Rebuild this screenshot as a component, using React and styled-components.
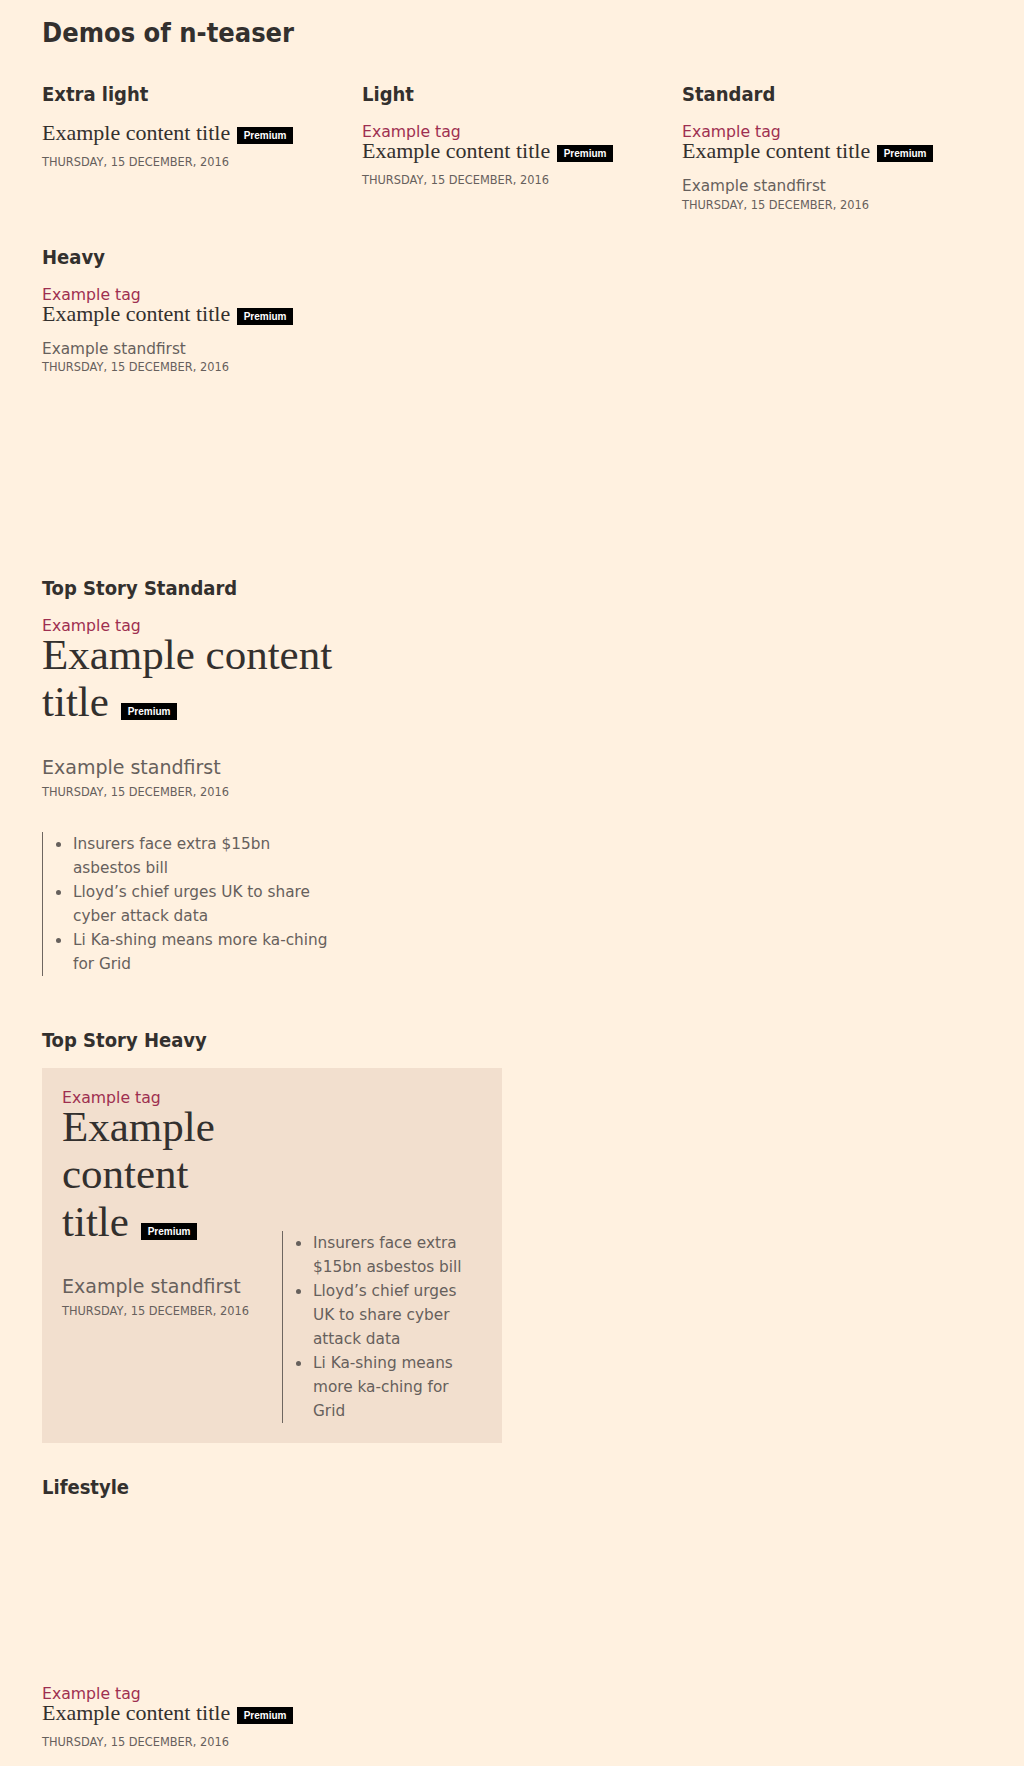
import styled, { createGlobalStyle } from 'styled-components';

const GlobalStyle = createGlobalStyle`
    html, body {
        margin: 0;
        background: #fff1e0;
    }
    body {
        font-family: "DejaVu Sans", sans-serif;
        color: #33302e;
    }
`;

const related = [
    'Insurers face extra $15bn asbestos bill',
    'Lloyd’s chief urges UK to share cyber attack data',
    'Li Ka-shing means more ka-ching for Grid',
];

const Teaser = ({ tag, standfirst, size = 'sm', titleSize }) => (
    <>
        {tag && <Tag>{tag}</Tag>}
        <Title $size={titleSize || size}>
            Example content title{' '}
            <Premium>Premium</Premium>
        </Title>
        {standfirst && <Standfirst $large={size === 'lg'}>Example standfirst</Standfirst>}
        <Timestamp $large={size === 'lg'}>Thursday, 15 December, 2016</Timestamp>
    </>
);

const RelatedLinks = () => (
    <Related>
        {related.map((item) => (
            <RelatedItem key={item}>
                <Dot />
                <span>{item}</span>
            </RelatedItem>
        ))}
    </Related>
);

export default function App() {
    return (
        <Page>
            <GlobalStyle />
            <PageTitle>Demos of n-teaser</PageTitle>

            <DemoGrid>
                <Demo>
                    <DemoTitle>Extra light</DemoTitle>
                    <Teaser titleSize="xs" />
                </Demo>
                <Demo>
                    <DemoTitle>Light</DemoTitle>
                    <Teaser tag="Example tag" />
                </Demo>
                <Demo>
                    <DemoTitle>Standard</DemoTitle>
                    <Teaser tag="Example tag" standfirst />
                </Demo>
                <Demo>
                    <DemoTitle>Heavy</DemoTitle>
                    <Teaser tag="Example tag" standfirst />
                    <ImageSlot />
                </Demo>
            </DemoGrid>

            <Section>
                <DemoTitle>Top Story Standard</DemoTitle>
                <Column>
                    <Teaser tag="Example tag" standfirst size="lg" />
                    <RelatedLinks />
                </Column>
            </Section>

            <Section>
                <DemoTitle>Top Story Heavy</DemoTitle>
                <HeavyBox>
                    <div>
                        <Teaser tag="Example tag" standfirst size="lg" />
                    </div>
                    <div>
                        <ImageSlot />
                        <RelatedLinks />
                    </div>
                </HeavyBox>
            </Section>

            <Section>
                <DemoTitle>Lifestyle</DemoTitle>
                <Column>
                    <ImageSlot />
                    <Teaser tag="Example tag" />
                </Column>
            </Section>
        </Page>
    );
}

const Page = styled.div`
    padding: 15px 42px 16px;
`;

const PageTitle = styled.h1`
    font-family: "DejaVu Sans Condensed", "DejaVu Sans", sans-serif;
    font-stretch: condensed;
    font-size: 27px;
    line-height: 36px;
    font-weight: bold;
    margin: 0 0 29px;
    color: #33302e;
`;

const DemoGrid = styled.div`
    display: grid;
    grid-template-columns: repeat(3, 300px);
    column-gap: 20px;
    row-gap: 30px;
    align-items: start;
`;

const Demo = styled.div`
    display: flex;
    flex-direction: column;
`;

const Section = styled.section`
    display: flow-root;
    margin-top: 30px;
`;

const Column = styled.div`
    width: 300px;
`;

const DemoTitle = styled.h2`
    font-family: "DejaVu Sans Condensed", "DejaVu Sans", sans-serif;
    font-stretch: condensed;
    font-size: 20px;
    line-height: 28px;
    font-weight: bold;
    margin: 0 0 14px;
    color: #33302e;
`;

const Tag = styled.div`
    font-size: 15.7px;
    line-height: 20px;
    color: #9e2f50;
`;

const titleSizes = {
    xs: 'font-size: 22px; line-height: 22px;',
    sm: 'font-size: 22px; line-height: 18px;',
    lg: 'font-size: 43px; line-height: 47.5px; margin-top: -5px;',
};

const Title = styled.div`
    font-family: "Liberation Serif", serif;
    color: #33302e;
    ${({ $size }) => titleSizes[$size]}
`;

const Premium = styled.span`
    display: inline-block;
    vertical-align: 1px;
    margin-left: 1px;
    padding: 0 7px;
    background: #000;
    color: #fff;
    font-family: "Liberation Sans", sans-serif;
    font-weight: bold;
    font-size: 10px;
    line-height: 17px;
`;

const Standfirst = styled.div`
    color: #66605c;
    font-size: ${({ $large }) => ($large ? '19px' : '15.3px')};
    line-height: ${({ $large }) => ($large ? '28px' : '20px')};
    margin-top: ${({ $large }) => ($large ? '27px' : '14px')};
`;

const Timestamp = styled.div`
    color: #66605c;
    font-size: 11.4px;
    line-height: 16px;
    text-transform: uppercase;
    margin-top: 9.6px;

    ${Standfirst} + & {
        margin-top: ${({ $large }) => ($large ? '3px' : '0.6px')};
    }
`;

const ImageSlot = styled.div`
    width: 100%;
    aspect-ratio: 16 / 9;
`;

const Related = styled.ul`
    list-style: none;
    margin: 32px 0 20px;
    padding: 0;
    border-left: 1px solid #6e6660;
    color: #66605c;
    font-size: 15.3px;
    line-height: 24px;
`;

const RelatedItem = styled.li`
    display: flex;
    align-items: flex-start;
`;

const Dot = styled.span`
    flex: none;
    width: 5px;
    height: 5px;
    border-radius: 50%;
    background: #66605c;
    margin: 10px 12px 0 13px;
`;

const HeavyBox = styled.div`
    display: grid;
    grid-template-columns: 200px 200px;
    column-gap: 20px;
    width: 420px;
    padding: 20px 20px 0;
    background: #f2dfce;

    ${Related} {
        margin-top: 31px;
    }
`;
